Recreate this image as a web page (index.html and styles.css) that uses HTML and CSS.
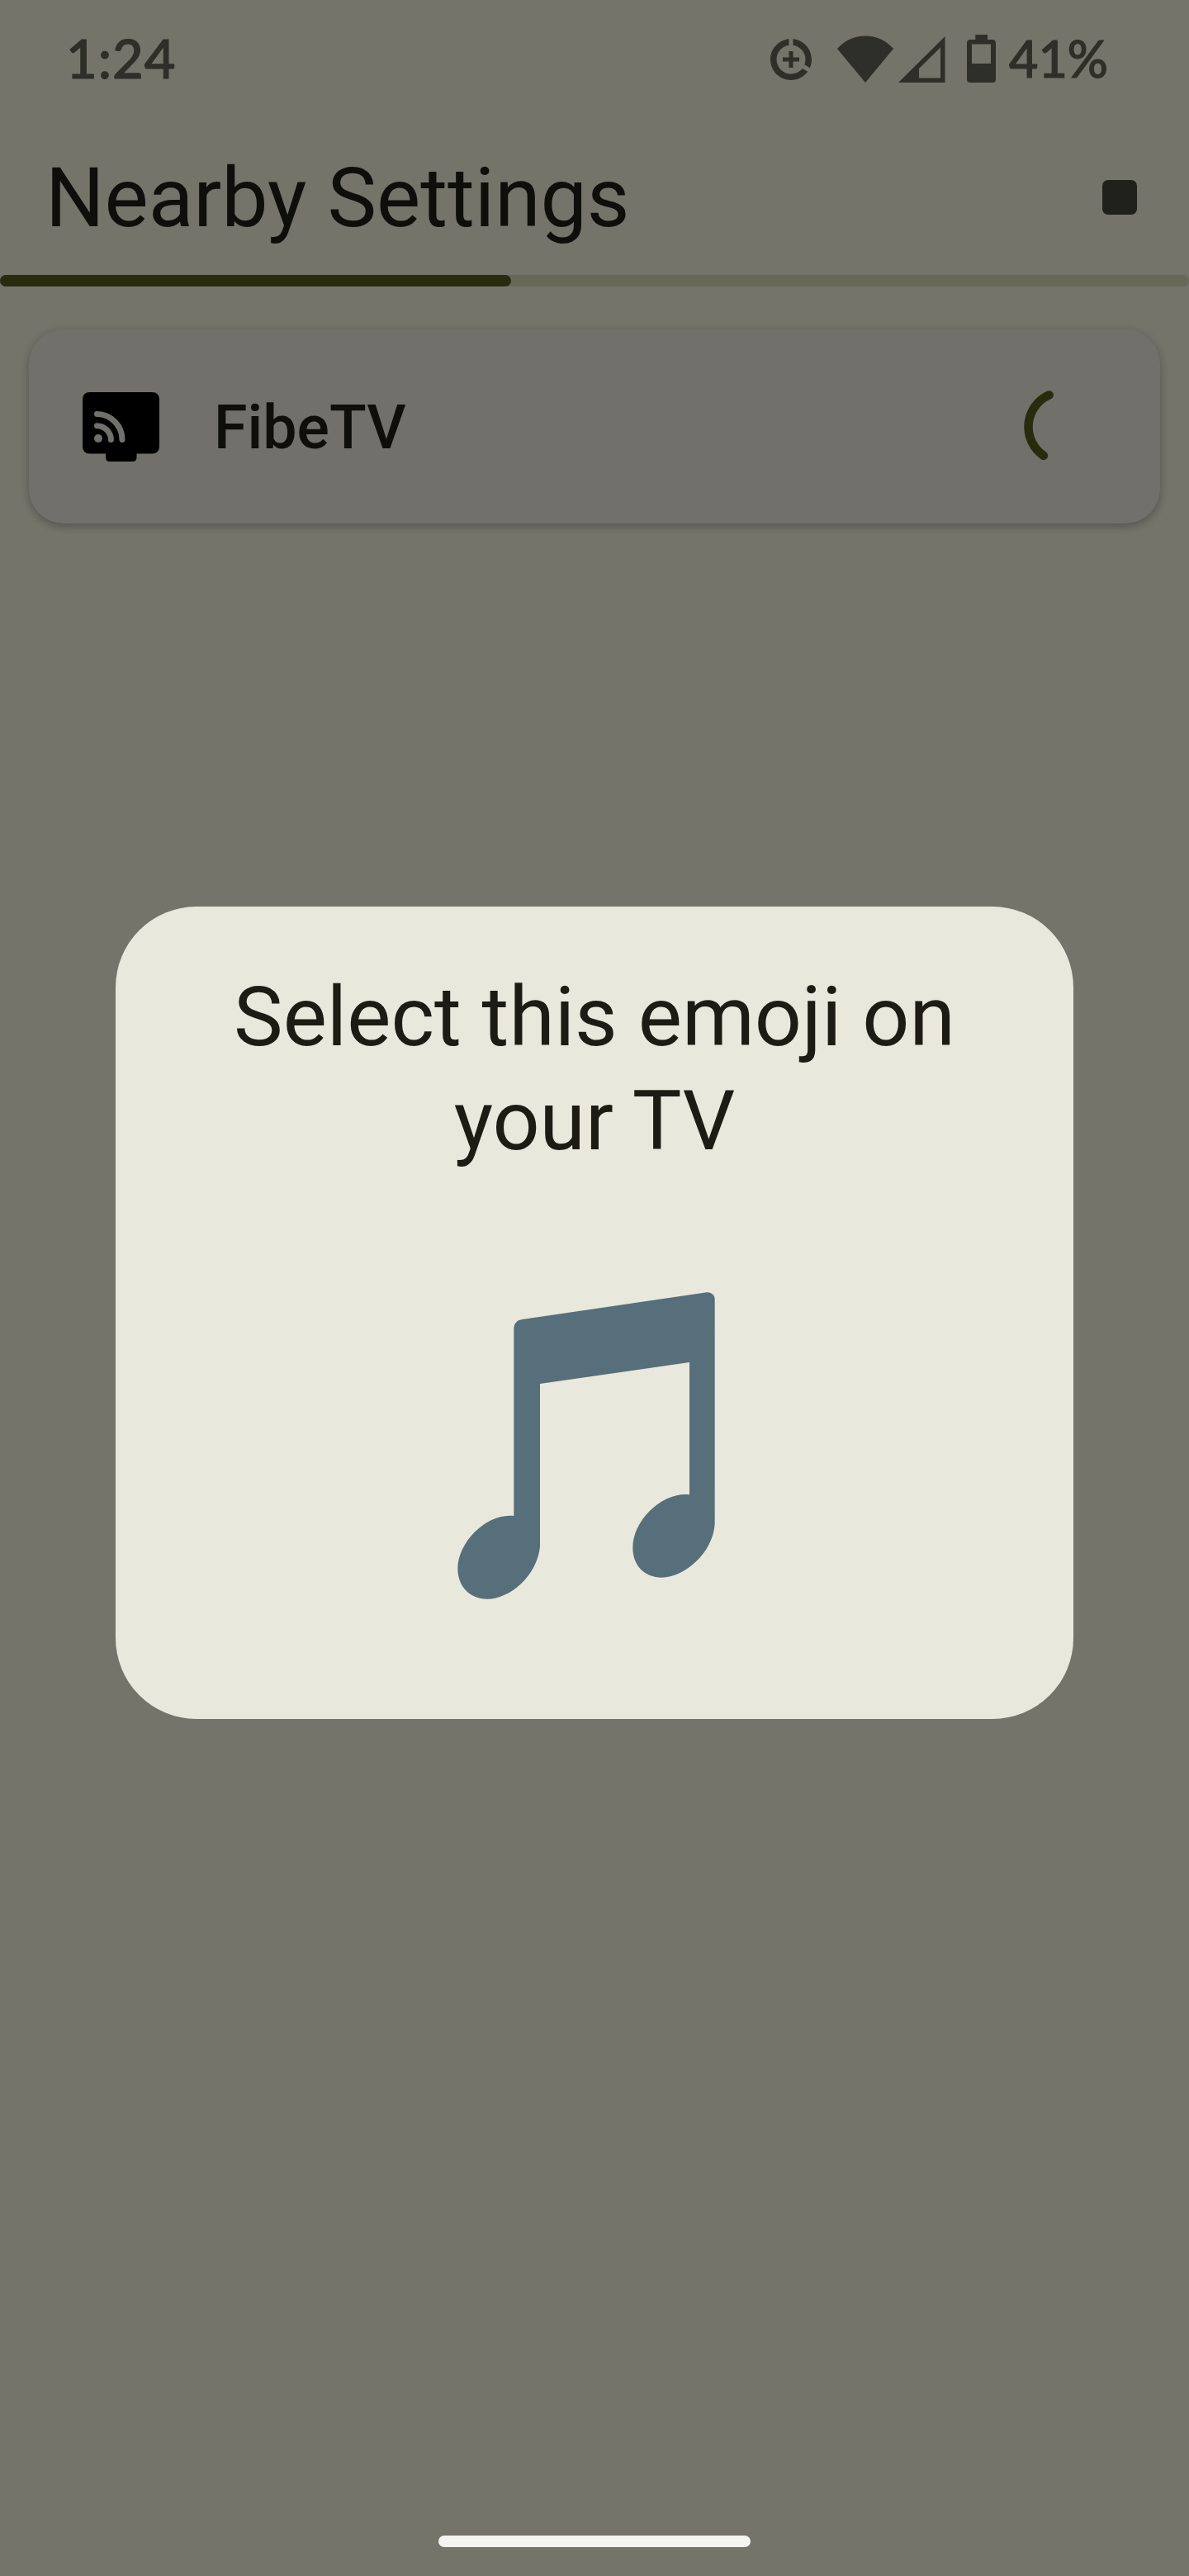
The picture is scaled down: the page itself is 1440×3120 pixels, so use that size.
FILE: index.html
```html
<!DOCTYPE html>
<html lang="en">
<head>
<meta charset="utf-8">
<title>Nearby Settings</title>
<link rel="stylesheet" href="styles.css">
</head>
<body>
<div class="screen">
  <header class="status">
    <span class="clock">1:24</span>
    <div class="indicators">
      <svg class="saver" viewBox="0 0 24 24"><path d="M13 2.05v3.03c3.39.49 6 3.39 6 6.92 0 .9-.18 1.75-.48 2.54l2.6 1.53c.56-1.24.88-2.62.88-4.07 0-5.18-3.95-9.45-9-9.95zM12 19c-3.87 0-7-3.13-7-7 0-3.53 2.61-6.43 6-6.92V2.05c-5.06.5-9 4.76-9 9.95 0 5.52 4.47 10 9.99 10 3.31 0 6.24-1.61 8.06-4.09l-2.6-1.53C16.17 17.98 14.21 19 12 19zM13 8h-2v3H8v2h3v3h2v-3h3v-2h-3z"/></svg>
      <svg class="wifi" viewBox="0 0 68 60"><path d="M0 19A45 45 0 0 1 68 19L34 60Z"/></svg>
      <svg class="signal" viewBox="0 0 57 60"><path fill-rule="evenodd" d="M0 60L56.5 4V60ZM25 43V54.5H51V17.500Z"/></svg>
      <svg class="battery" viewBox="0 0 35 60"><path fill-rule="evenodd" d="M10.300 2H25V8H31Q35 8 35 12V56Q35 60 31 60H4Q0 60 0 56V12Q0 8 4 8H10.300ZM6 13.500V37H29V13.500Z"/></svg>
      <span class="percent">41%</span>
    </div>
  </header>
  <div class="appbar">
    <h1 class="title">Nearby Settings</h1>
    <div class="stop"></div>
  </div>
  <div class="progress"><div class="progress-value"></div></div>
  <main class="devices">
    <div class="device">
      <svg class="cast" viewBox="0 0 94 84">
        <path d="M9 0H84Q93 0 93 9V65.500Q93 74.500 84 74.500H65.500V79Q65.500 84 60.500 84H33Q28 84 28 79V74.500H9Q0 74.500 0 65.500V9Q0 0 9 0Z"/>
        <circle class="wave-dot" cx="19" cy="56" r="5"/>
        <path class="wave" d="M17.500 40.700A17 17 0 0 1 34.400 57.600M17.500 26.500A31 31 0 0 1 48 57.600"/>
      </svg>
      <span class="device-name">FibeTV</span>
      <svg class="spinner" viewBox="0 0 100 100"><path d="M32.600 11.400A42.300 42.300 0 0 0 25.900 84.900"/></svg>
    </div>
  </main>
  <div class="overlay">
    <section class="dialog">
      <h2 class="dialog-title">Select this emoji on<br>your TV</h2>
      <svg class="note" viewBox="0 0 1200 1320"><path d="M307 238C307 218 320 206 338 204L1008 106C1024 104 1037 116 1037 130V948C1030 1054 925 1142 845 1142C780 1142 739 1096 739 1035C739 932 848 830 945 841V360L402 438V1028C393 1132 295 1220 210 1220C145 1220 103 1172 103 1110C103 1010 213 906 307 918Z"/></svg>
    </section>
  </div>
  <div class="home"></div>
</div>
</body>
</html>
```

FILE: styles.css
```css
* { box-sizing: border-box; }
body { margin: 0; background: #74746b; font-family: Roboto, sans-serif; }
svg { display: block; flex: none; }
.screen { position: relative; display: flex; flex-direction: column; width: 1440px; height: 3120px; overflow: hidden; }
.status { display: flex; justify-content: space-between; height: 144px; padding: 40px 101px 0 80px; color: #2e2f29; fill: #2e2f29; font-family: Lato, sans-serif; font-weight: 500; line-height: 61px; -webkit-text-stroke: 1.2px #2e2f29; }
.status svg { stroke: none; }
.clock { font-size: 65px; letter-spacing: 1px; }
.indicators { display: flex; }
.saver { width: 60px; height: 60px; margin: 2px 26px 0 0; }
.wifi { width: 68px; height: 60px; margin-right: 6px; }
.signal { width: 57px; height: 60px; margin-right: 26px; }
.battery { width: 35px; height: 60px; margin-right: 16px; }
.percent { width: 117px; font-size: 61px; white-space: nowrap; }
.appbar { display: flex; align-items: center; justify-content: space-between; height: 189px; padding: 0 63px 0 55px; }
.title { margin: 0; padding-top: 2px; color: #0e0f0a; font-size: 100.3px; font-weight: 400; line-height: 126px; }
.stop { width: 42px; height: 42px; border-radius: 7px; background: #20211b; }
.progress { height: 14px; border-radius: 7px; background: #686857; }
.progress-value { width: 619px; height: 14px; border-radius: 7px; background: #292b0f; }
.devices { padding: 52px 35px 0; }
.device { display: flex; align-items: center; height: 235px; padding: 0 67px 0 65px; border-radius: 42px; background: #71706a; box-shadow: 0 4px 8px rgba(40, 40, 35, .3), 0 1px 12px rgba(60, 50, 60, .12); }
.cast { width: 94px; height: 84px; }
.wave { fill: none; stroke: #71706a; stroke-width: 7; stroke-linecap: round; }
.wave-dot { fill: #71706a; }
.device-name { flex: 1; margin-left: 65px; padding-top: 2px; color: #0e0f0a; font-size: 73.5px; font-weight: 500; }
.spinner { width: 100px; height: 100px; }
.spinner path { fill: none; stroke: #292b0f; stroke-width: 10.5; stroke-linecap: round; }
.overlay { position: absolute; inset: 0; display: flex; flex-direction: column; align-items: center; padding-top: 1098px; }
.dialog { display: flex; flex-direction: column; align-items: center; width: 1160px; height: 984px; padding-top: 71px; border-radius: 98px; background: #e9e8dc; }
.dialog-title { margin: 0; color: #1c1c14; font-size: 100.3px; font-weight: 400; line-height: 126px; text-align: center; }
.note { width: 400px; height: 440px; margin-top: 109px; fill: #566f7a; }
.home { width: 378px; height: 14px; margin: auto auto 35px; border-radius: 7px; background: #f4f4f1; }
```
